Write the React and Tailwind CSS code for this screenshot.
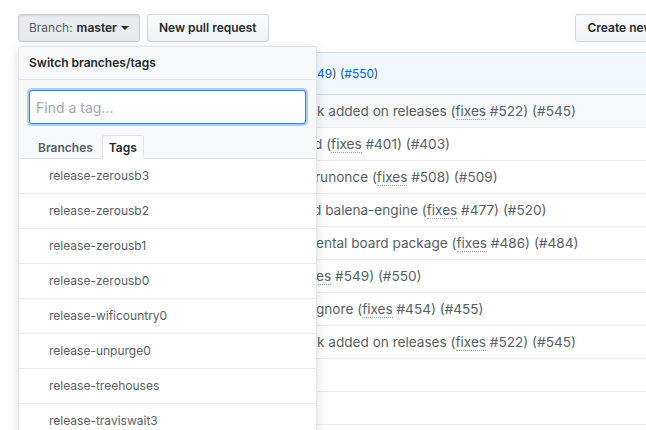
import React from 'react'

const tags = [
  'release-zerousb3',
  'release-zerousb2',
  'release-zerousb1',
  'release-zerousb0',
  'release-wificountry0',
  'release-unpurge0',
  'release-treehouses',
  'release-traviswait3',
]

function Fixes({ children = 'fixes' }) {
  return <span className="border-b border-dotted border-[#959da5]">{children}</span>
}

const rows = [
  {
    pad: 'pl-[299px]',
    bg: 'bg-[#f6f8fa]',
    text: <>k added on releases (<Fixes /> #522) (#545)</>,
  },
  { pad: 'pl-[296px]', text: <>d (<Fixes /> #401) (#403)</> },
  { pad: 'pl-[297px]', text: <>runonce (<Fixes /> #508) (#509)</> },
  { pad: 'pl-[295px]', text: <>d balena-engine (<Fixes /> #477) (#520)</> },
  { pad: 'pl-[298px]', text: <>ental board package (<Fixes /> #486) (#484)</> },
  { pad: 'pl-[291px]', text: <><Fixes>xes</Fixes> #549) (#550)</> },
  { pad: 'pl-[298px]', text: <>gnore (<Fixes /> #454) (#455)</> },
  { pad: 'pl-[299px]', text: <>k added on releases (<Fixes /> #522) (#545)</> },
  { pad: 'pl-[299px]', text: null },
  { pad: 'pl-[299px]', text: null },
]

export default function App() {
  return (
    <div className="relative w-[646px] h-[430px] overflow-hidden bg-white font-['Inter','Liberation_Sans',sans-serif] text-[#24292e]">
      {/* Top buttons */}
      <div className="flex w-[1000px] items-center gap-[7px] pt-[14px] pl-[18px] whitespace-nowrap">
        <button
          type="button"
          className="flex items-center h-[28px] px-[10px] rounded-[3px] border border-[#c6cbd1] bg-[#e9ecef] text-[12px] leading-4 shadow-[inset_0_1px_2px_rgba(27,31,35,0.1)]"
        >
          <span className="text-[#586069]">Branch:</span>
          <span className="ml-1 font-semibold">master</span>
          <span className="ml-[4px] inline-block w-0 h-0 border-x-4 border-x-transparent border-t-4 border-t-[#24292e]" />
        </button>
        <button
          type="button"
          className="h-[28px] px-[11px] rounded-[3px] border border-[#d1d5da] bg-gradient-to-b from-[#fafbfc] to-[#eff3f6] text-[12px] font-semibold leading-4"
        >
          New pull request
        </button>
        <button
          type="button"
          className="ml-[299px] h-[28px] px-[12px] rounded-[3px] border border-[#d1d5da] bg-gradient-to-b from-[#fafbfc] to-[#eff3f6] text-[12px] font-semibold leading-4"
        >
          Create new file
        </button>
      </div>

      {/* Commit / file rows behind the menu */}
      <div className="mt-[10px] ml-[18px] w-[1000px] text-[13.6px] leading-5 whitespace-nowrap">
        <div className="flex items-center h-[43px] pl-[299px] border-y border-[#c8e1ff] bg-[#f1f8ff] text-[12px] text-[#444d56]">
          <span>
            <span className="text-[#0366d6]">49</span>) (<span className="text-[#0366d6]">#550</span>)
          </span>
        </div>
        {rows.map((r, i) => (
          <div
            key={i}
            className={`flex items-center h-[33px] border-b border-[#eaecef] text-[#586069] ${r.pad} ${r.bg ?? ''}`}
          >
            <span>{r.text}</span>
          </div>
        ))}
      </div>

      {/* Branch / tag switcher */}
      <div className="absolute left-[18px] top-[46px] w-[299px] rounded-[3px] border border-[#e1e4e8] bg-white shadow-[0_3px_12px_rgba(27,31,35,0.15)] overflow-hidden">
        <div className="px-[10px] py-2 bg-[#f6f8fa] border-b border-[#e1e4e8] text-[12px] leading-4 font-semibold">
          Switch branches/tags
        </div>
        <div className="bg-[#f6f8fa]">
          <div className="px-[10px] pt-[10px]">
            <input
              type="text"
              placeholder="Find a tag..."
              className="block w-full h-[34px] px-[6px] rounded-[3px] border border-[#2188ff] bg-white text-[14px] outline-none placeholder:text-[#a3aab1] shadow-[inset_0_1px_2px_rgba(27,31,35,0.075),0_0_0_2px_rgba(3,102,214,0.3)]"
            />
          </div>
          <div className="flex mt-[11px] px-[10px] border-b border-[#e1e4e8]">
            <div className="-mb-px px-2 py-1 border border-b-0 border-transparent text-[12px] leading-[15px] font-semibold text-[#586069]">
              Branches
            </div>
            <div className="-mb-px px-[6px] py-1 border border-b-0 border-[#e1e4e8] rounded-t-[3px] bg-white text-[12px] leading-[15px] font-semibold">
              Tags
            </div>
          </div>
        </div>
        <div>
          {tags.map((t) => (
            <div
              key={t}
              className="flex items-center h-[35px] pl-[30px] border-b border-[#eaecef] text-[12px] text-[#586069]"
            >
              {t}
            </div>
          ))}
        </div>
      </div>
    </div>
  )
}
